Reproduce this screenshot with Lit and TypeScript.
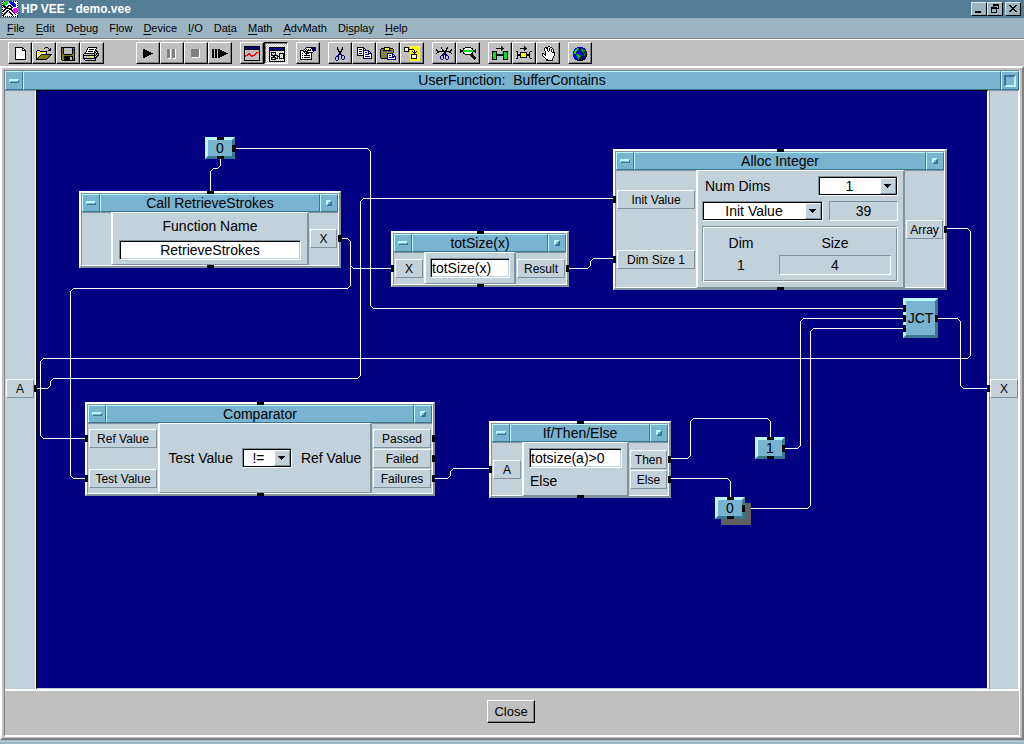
import { LitElement, html, svg, css } from "lit";
import { customElement, property } from "lit/decorators.js";

const PALETTE: Record<string, string> = {
  K: "#000000", W: "#ffffff", G: "#c0c0c0", S: "#808080", O: "#808000", Y: "#ffff00",
  B: "#000080", L: "#0000ff", R: "#ff0000", E: "#00e020", D: "#008000", C: "#008080", M: "#ff00ff",
};

/** Turns rows of palette letters into one path per colour. */
function bitmap(rows: string[], width: number, height: number, dx = 0, dy = 0) {
  const paths: Record<string, string> = {};
  rows.forEach((row, y) => {
    for (let x = 0; x < row.length; ) {
      let end = x + 1;
      while (row[end] === row[x]) end++;
      if (PALETTE[row[x]]) {
        paths[row[x]] = (paths[row[x]] ?? "") + `M${x + dx} ${y + dy}h${end - x}v1h${x - end}z`;
      }
      x = end;
    }
  });
  return html`<svg class="icon" width=${width} height=${height} viewBox="0 0 ${width} ${height}" shape-rendering="crispEdges" aria-hidden="true">
    ${Object.entries(paths).map(([k, d]) => svg`<path fill=${PALETTE[k]} d=${d}></path>`)}
  </svg>`;
}

interface Tool { name: string; rows: string[]; x: number; y: number; pressed?: boolean; disabled?: boolean }

const TOOLS: Tool[][] = [
  [
    { name: "New", x: 4, y: 2, rows: [
      "KKKKKKKK", "KWWWWWWKK", "KWWWWWWKWK", "KWWWWWWKKKK", "KWWWWWWWWWK", "KWWWWWWWWWK", "KWWWWWWWWWK",
      "KWWWWWWWWWK", "KWWWWWWWWWK", "KWWWWWWWWWK", "KWWWWWWWWWK", "KWWWWWWWWWK", "KKKKKKKKKKK"] },
    { name: "Open", x: 0, y: 2, rows: [
      "..........KKK...", ".........K...K.K", "..............KK", "..KKK........KKK", ".KYWYKKKKKKK....", ".KWYWYWYWYWK....",
      ".KYWYWYWYWYK....", ".KWYWYKKKKKKKKKKK", ".KYWYKOOOOOOOOOK.", ".KWYKOOOOOOOOOK..", ".KYKOOOOOOOOOK...", ".KKOOOOOOOOOK....", ".KKKKKKKKKKK....."] },
    { name: "Save", x: 2, y: 2, rows: [
      "KKKKKKKKKKKKKK", "KOKGGGGGGGGKGK", "KOKGGGGGGGGKKK", "KOKGGGGGGGGKOK", "KOKGGGGGGGGKOK", "KOKGGGGGGGGKOK", "KOKGGGGGGGGKOK",
      "KOOKKKKKKKKOOK", "KOOOOOOOOOOOOK", "KOOKKKKKKKKKOK", "KOOKKKKKKGGKOK", "KOOKKKKKKGGKOK", "KOOKKKKKKGGKOK", ".KKKKKKKKKKKKK"] },
    { name: "Print", x: 0, y: 2, rows: [
      ".....KKKKKKKKK..", "....KWWWWWWWWK..", "....KWKKKKKWK...", "...KWWWWWWWWKK..", "...KWKKKKKWKGKK.", "..KWWWWWWWWKKGK.",
      ".KKKKKKKKKKKGKKK", "KGGGGGGGGGGKGKGK", "KKKKKKKKKKKKKGKK", "KGGGGGGYYYGKGKK.", "KGGGGGGGGGGKKK..", "KKKKKKKKKKKKK...", ".KGGGGGGGGGGK...", "..KKKKKKKKKKK..."] },
  ],
  [
    { name: "Run", x: 4, y: 4, rows: ["KK", "KKKK", "KKKKKK", "KKKKKKKK", "KKKKKKKKKK", "KKKKKKKK", "KKKKKK", "KKKK", "KK"] },
    { name: "Pause", x: 4, y: 4, disabled: true, rows: [...Array(8).fill("SSSW.SSSW"), "SSSW.SSSW", ".WWW..WWW"] },
    { name: "Stop", x: 4, y: 4, disabled: true, rows: [...Array(8).fill("SSSSSSSSW"), ".WWWWWWWW"] },
    { name: "Step", x: 1, y: 4, rows: [
      "KK.KK.KK", "KK.KK.KKKK", "KK.KK.KKKKKK", "KK.KK.KKKKKKKK", "KK.KK.KKKKKKKKKK", "KK.KK.KKKKKKKK", "KK.KK.KKKKKK", "KK.KK.KKKK", "KK.KK.KK"] },
  ],
  [
    { name: "Panel view", x: 1, y: 1, rows: [
      "KKKKKKKKKKKKKKKK", "KLBBBBBBBBBBBBBK", "KBBBBBBBBBBBBBBK", "KKKKKKKKKKKKKKKK", "KGGGGGGGGGGGGGGK", "KGGGGGGGGGGGGGGK", "KGGGGGGGGGGGRRRK",
      "KGGGRRGGGGGRRGGK", "KGGRRRRGGGRRGGGK", "KRRRGGRRRRRGGGGK", "KRGGGGGRRGGGGGGK", "KGGGGGGGGGGGGGGK", "KGGGGGGGGGGGGGGK", "KGGGGGGGGGGGGGGK", "KKKKKKKKKKKKKKKK"] },
    { name: "Detail view", x: 2, y: 2, pressed: true, rows: [
      "KKKKKKKKKKKKKKKK", "KLBBBBBBBBBBBBBK", "KBBBBBBBBBBBBBBK", "KKKKKKKKKKKKKKKK", "K..............K", "K.KKKKK........K", "K.K...K...KKKKKK",
      "K.K...K...K...KK", "K.KKKKKKK.K...KK", "K...KK..KKK...KK", "K.KKKKK.K.K...KK", "K.K...KKK.KKKKKK", "K.KKKKK........K", "K..............K", "KKKKKKKKKKKKKKKK"] },
  ],
  [
    { name: "Properties", x: 1, y: 2, rows: [
      "......KKKKKKKBBB", ".....KWWWWWKKBBB", "....KWKWKWKWKBBB", "KKKKWKWKKKKWKKBB", "KWWKKKKKWWWWWK..", "KWWWKWKKKKKKK...", "KWKWWKKKKWWK....",
      "KWWWWWKWWWWK....", "KWKWKKKKKKWK....", "KWWWWWWWWWWK....", "KWKWKKKKKKWK....", "KWWWWWWWWWWK....", "KKKKKKKKKKKK...."] },
  ],
  [
    { name: "Cut", x: 4, y: 2, rows: [
      "..K....K", "..K....K", "..KK..KK", "...K..K.", "...KKKK.", "....KK..", "....KK..", "...BBBB.", "..BB..BBB", ".BBB..B..B", "B..B..B..B", "B..B..B..B", "B..B...BB.", ".BB......."] },
    { name: "Copy", x: 2, y: 2, rows: [
      "KKKKKKK", "KWWWWWKK", "KWKKKWKWK", "KWWWWWBBBBBB", "KWKKKWBWWWWBB", "KWWWWWBWBBWBWB", "KWKKKWBWWWWBBBB", "KWWWWWBWBBBBWWB", "KKKKKKBWWWWWWWB", "......BWBBBBBWB", "......BWWWWWWWB", "......BBBBBBBBB"] },
    { name: "Paste", x: 1, y: 2, rows: [
      "....KKKKKK", ".KKKKYYYYKKKK", "KOSOKYYYYKOSOK", "KSOKKKKKKKKOSK", "KOSOSOSOSOSOSK", "KSOSOSOSOSOSOK", "KOSOSOSBBBBBB.", "KSOSOSOBWWWWBB", "KOSOSOSBWBBWBWB", "KSOSOSOBWWWWBBBB", "KOSOSOSBWBBBBBWB", ".KKKKKKBWWWWWWWB", ".......BBBBBBBBB"] },
    { name: "Create UserObject", x: 1, y: 1, rows: [
      "......YYYYYYYYYY", "KKKKK.YYYYYYYYYY", "KWWWK.YYYYYYYYYY", "KWWWKKKKKKYYYYYY", "KWWWK.YYYYKYYYYY", "KKKKK.YYKYKYKYYY", "......YYYKKKYYYY", "......YYYYKYYYYY", "......YKKKKKKYYY", "......YKWWWWKYYY", "......YKWWWWKYYY", "......YKWWWWKYYY", "......YKKKKKKYYY", "......YYYYYYYYYY", "......YYYYYYYYYY"] },
  ],
  [
    { name: "Cut lines", x: 1, y: 2, rows: [
      ".....K.....K", ".....K....KK", "K.....K...K....K", "KK....KK.KK...KK", ".KKKKKKKKKKKKKK.", ".KK.....KK...KK.", "K......KKK.....K", "......BBKBB", ".....BBB.BBB", "....B..B.B..B", "....B..B.B..B", "....B..B.B..B", ".....BB...BB"] },
    { name: "Line probe", x: 1, y: 2, rows: [
      ".....KKKKKK", "...KKWWWWWWKK", "K..KWWWWWWWWK..K", "KKKEEEEEEEEEEKKK", "KKKEEEEEEEEEEKKK", "K..KWWWWWWWWK..K", "...KKWWWWWWKK", ".....KKKKKKKK", "..........KKKK", "...........KKKK", "............KKKK", ".............KKK", "..............K"] },
  ],
  [
    { name: "Step into", x: 1, y: 1, rows: [
      ".........K", ".........KK", "....KKKKKKKK", ".........KK", ".........K", "KKKKK......KKKKK", "KEEEK......KEEEK", "KEEEK......KEEEK", "KEEEKKKKKKKKEEEK", "KEEEKKKKKKKKEEEK", "KEEEK......KEEEK", "KEEEK......KEEEK", "KEEEK......KEEEK", "KKKKK......KKKKK"] },
    { name: "Step over", x: 1, y: 1, rows: [
      "........K", "........KK", "....KKKKKKK", "........KK", "........K", "KK............KK", ".K..KKKKKKK..K..", ".K..KYYYYYK..K..", ".KKKKYYYYYKKKK..", ".KKKKYYYYYKKKK..", ".K..KYYYYYK..K..", ".K..KKKKKKK..K..", "KK............KK"] },
    { name: "Breakpoint", x: 3, y: 1, rows: [
      "......KK", "...KKKWWKK", "..KWKKWKWWK", "..KWWKWKWKWK", "..KWWKWKWKWK", "...KWWKWWKWK", "...KWWWWWWKKK", "KK.KWWWWWWWWK", "KWKKWWWWWWWWK", "KWWKWWWWWWWWK", ".KWWWWWWWWWK", "..KWWWWWWWWK", "...KWWWWWWK.", "....KKWWWWK.", "....KKKKKKK"] },
  ],
  [
    { name: "Web", x: 2, y: 2, rows: [
      "....LLBBBL....", "..LLEDBBCBBL..", ".LDEEDBBDDDBB.", ".LEEDLLBDEDDB.", "LEEDLLLBBDDDKK", "LEELLLLLBDDBBK", "LDELCLLLLBBDBK", "LLLDDDCLLLBDDK", "BLLDEEDDLLBDBK", "BLLLDEEDBBBBKK", ".BLLDEDBBBBKK.", ".BBLLDDBBBKKK.", "..BBBDBBBKKK..", "....BBKKKK...."] },
  ],
];

const HP_LOGO = [
  "KWKEEEELLLWKWKWK", "WEEEEEWLLLLLWWWW", "KEEEEEWWLLLLLWWK", "WEEEEWWWWLLLLLWW", "KKKWWWKKKWLLLLWK", "WKKKWKKWKKWLLLWW", "KWKKKKWWWKKWWWWK",
  "WWWKKKKKKKWWMMMW", "KWKKWWWKKKWMMMMM", "WKKWWKKWWKKMMMMM", "KKWWKKWKWWKMMMMK", "WWWKKWWKKWWKMMMW", "KWKKWWWWKKWWKWWK", "WKKWWWWWWKKWWKWW", "KKWWWWWWWWKWWWWK", "WKWKWKWKWKWKWKWK",
];

const MENUS: [string, string, string][] = [
  ["", "F", "ile"], ["", "E", "dit"], ["De", "b", "ug"], ["F", "l", "ow"], ["", "D", "evice"], ["", "I", "/O"],
  ["Da", "t", "a"], ["", "M", "ath"], ["", "A", "dvMath"], ["Di", "s", "play"], ["", "H", "elp"],
];

type Point = [number, number];

/** Diagram coordinates of the workspace's top left corner. */
const ORIGIN = { x: 37, y: 91 };

const WIRES: Point[][] = [
  [[235, 148], [370, 148], [370, 308], [903, 308]],
  [[220, 158], [220, 168], [210, 168], [210, 191]],
  [[341, 238], [350, 238], [350, 268], [391, 268]],
  [[341, 238], [350, 238], [350, 288], [70, 288], [70, 478], [86, 478]],
  [[568, 268], [590, 268], [590, 258], [613, 258]],
  [[36, 388], [50, 388], [50, 378], [360, 378], [360, 198], [613, 198]],
  [[946, 228], [970, 228], [970, 358], [40, 358], [40, 438], [86, 438]],
  [[937, 318], [960, 318], [960, 388], [990, 388]],
  [[434, 478], [450, 478], [450, 468], [490, 468]],
  [[670, 458], [690, 458], [690, 418], [770, 418], [770, 438]],
  [[670, 478], [730, 478], [730, 498]],
  [[784, 448], [800, 448], [800, 318], [904, 318]],
  [[744, 508], [810, 508], [810, 328], [904, 328]],
];

/** Orthogonal route with its corners cut off. */
function route(points: Point[]): string {
  const cut = 3;
  const toward = (a: Point, b: Point): Point => [a[0] + Math.sign(b[0] - a[0]) * cut, a[1] + Math.sign(b[1] - a[1]) * cut];
  const out: Point[] = [points[0]];
  for (let i = 1; i < points.length - 1; i++) out.push(toward(points[i], points[i - 1]), toward(points[i], points[i + 1]));
  out.push(points[points.length - 1]);
  return out.map(([x, y]) => `${x - ORIGIN.x + 0.5},${y - ORIGIN.y + 0.5}`).join(" ");
}

const place = (x: number, y: number, w: number, h: number) =>
  `left:${x - ORIGIN.x}px;top:${y - ORIGIN.y}px;width:${w}px;height:${h}px`;

const sharedStyles = css`
  .port {
    position: relative;
    box-sizing: border-box;
    height: 19px;
    border: 1px solid;
    border-color: #fff #80929c #80929c #fff;
    font-size: 12px;
    line-height: 18px;
    text-align: center;
    white-space: nowrap;
  }
  .port::after {
    content: "";
    position: absolute;
    top: 5px;
    width: 3px;
    height: 7px;
    background: #000;
  }
  .in::after { left: -5px; }
  .out::after { right: -5px; }
  .bar {
    box-sizing: border-box;
    width: 10px;
    height: 4px;
    border: 1px solid;
    border-color: #b8f8ff #387890 #387890 #b8f8ff;
    border-top-width: 2px;
  }
`;

@customElement("vee-node")
export class VeeNode extends LitElement {
  @property() heading = "";
  @property({ attribute: false }) inputs: string[] = [];
  @property({ attribute: false }) outputs: string[] = [];
  @property({ type: Number }) inwidth = 30;
  @property({ type: Number }) outwidth = 30;
  @property({ type: Number }) ingap = 1;

  static styles = [sharedStyles, css`
    :host {
      position: absolute;
      box-sizing: border-box;
      display: flex;
      border: 2px solid;
      border-color: #fff #80929c #80929c #fff;
      background: #c3d2da;
      font-size: 14px;
    }
    :host::before, :host::after {
      content: "";
      position: absolute;
      left: calc(50% - 3px);
      width: 7px;
      height: 3px;
      background: #000;
    }
    :host::before { top: -2px; }
    :host::after { bottom: -2px; }
    .frame {
      flex: 1;
      display: flex;
      flex-direction: column;
      border: 1px solid;
      border-color: #80929c #fff #fff #80929c;
    }
    .title { display: flex; height: 18px; background: #78b4d0; }
    h2 { flex: 1; margin: 0; font-size: 14px; font-weight: normal; line-height: 17px; text-align: center; white-space: nowrap; }
    h2, button {
      box-sizing: border-box;
      border: 1px solid;
      border-color: #b8f8ff #387890 #387890 #b8f8ff;
    }
    button { width: 18px; padding: 0; display: grid; place-items: center; background: #78b4d0; }
    .box { width: 6px; height: 6px; box-sizing: border-box; border: 2px solid; border-color: #b8f8ff #387890 #387890 #b8f8ff; }
    .body { flex: 1; display: flex; }
    .column { flex: none; box-sizing: border-box; padding: 0 1px 1px; display: flex; flex-direction: column; justify-content: center; border-top: 1px solid #80929c; }
    .center { flex: 1; min-width: 0; box-sizing: border-box; border: 1px solid; border-width: 1px 2px; border-color: #fff #80929c #80929c #fff; display: flex; flex-direction: column; }
  `];

  render() {
    return html`<div class="frame">
      <div class="title">
        <button aria-label="Object menu"><span class="bar"></span></button>
        <h2>${this.heading}</h2>
        <button aria-label="Minimize"><span class="box"></span></button>
      </div>
      <div class="body">
        <div class="column" style="width:${this.inwidth}px;gap:${this.ingap}px">
          ${this.inputs.map((p) => html`<div class="port in">${p}</div>`)}
        </div>
        <div class="center"><slot></slot></div>
        <div class="column" style="width:${this.outwidth}px;gap:1px">
          ${this.outputs.map((p) => html`<div class="port out">${p}</div>`)}
        </div>
      </div>
    </div>`;
  }
}

@customElement("app-root")
export class AppRoot extends LitElement {
  static styles = [sharedStyles, css`
    :host {
      display: flex;
      flex-direction: column;
      min-height: 100vh;
      background: #9cb5c3;
      color: #000;
      font-family: "Liberation Sans", Arial, sans-serif;
      font-size: 14px;
      overflow: hidden;
    }
    button, input, select { font-family: inherit; color: inherit; margin: 0; border-radius: 0; }
    svg { display: block; }
    .titlebar { display: flex; align-items: center; gap: 3px; height: 18px; padding: 0 3px 0 2px; background: #557d96; color: #fff; }
    .titlebar h1 { flex: 1; margin: 0; font-size: 12px; line-height: 18px; }
    .winbuttons { display: flex; }
    .winbuttons button { width: 16px; height: 14px; padding: 0; display: grid; place-items: center; background: #9cb5c3; border: 1px solid; border-color: #dce8f0 #000 #000 #dce8f0; }
    .winbuttons button:last-child { margin-left: 2px; }
    .menubar { display: flex; gap: 11px; height: 20px; padding: 0 7px; background: #9cb5c3; border-bottom: 1px solid #808080; }
    .menubar button { padding: 0; border: 0; background: none; font-size: 11px; line-height: 20px; }
    .menubar u { text-underline-offset: 2px; }
    .toolbar { display: flex; gap: 8px; padding: 2px 8px; background: #c0c0c0; border-top: 1px solid #fff; }
    .toolbar .group { display: flex; }
    .toolbar .group:first-child { margin-right: 24px; }
    .tool { box-sizing: border-box; width: 24px; height: 22px; padding: 1px 2px; background: #c0c0c0; border: 1px solid; border-color: #fff #000 #000 #fff; box-shadow: inset -1px -1px #808080; }
    .tool.pressed { border-color: #000 #fff #fff #000; box-shadow: inset 1px 1px #808080; background: #c0c0c0 repeating-conic-gradient(#fff 0 25%, #c0c0c0 0 50%) 0 0 / 2px 2px; }
    .window {
      flex: 1;
      display: flex;
      flex-direction: column;
      margin-bottom: 4px;
      border: 2px solid;
      border-color: #fff #808080 #808080 #fff;
      background: #c0c0c0;
      padding: 2px 2px 1px 2px;
      box-shadow: 0 1px #9cb5c3, 0 2px #c3d2da;
    }
    .inner { flex: 1; display: flex; flex-direction: column; border: 1px solid; border-color: #808080 #fff #fff #808080; border-bottom-width: 2px; }
    .caption { display: flex; height: 19px; background: #78b4d0; }
    .caption h2 { flex: 1; margin: 0; font-size: 14px; font-weight: normal; line-height: 17px; text-align: center; }
    .caption h2, .caption button { box-sizing: border-box; border: 1px solid; border-color: #b8f8ff #387890 #387890 #b8f8ff; }
    .caption button { width: 18px; padding: 0; display: grid; place-items: center; background: #78b4d0; }
    .sunken { width: 12px; height: 12px; box-sizing: border-box; border: 2px solid; border-color: #387890 #b8f8ff #b8f8ff #387890; }
    .stage { flex: 1; display: flex; background: #c3d2da; }
    .rail { box-sizing: border-box; width: 31px; padding: 0 1px 4px; display: flex; flex-direction: column; justify-content: center; border-top: 1px solid #80929c; border-right: 1px solid #fff; }
    .rail.right { width: 30px; padding: 0 0 4px; border-left: 1px solid #80929c; }
    .rail .port { z-index: 1; }
    .rail .in::after { left: -4px; }
    .rail .out::after { right: -4px; }
    .canvas { position: relative; flex: 1; min-height: 560px; overflow: hidden; background: #000080; border: 1px solid; border-color: #000 #c3d2da #c3d2da #000; border-right: 2px solid #fff; }
    .canvas > svg { width: 100%; height: 100%; }
    .wires polyline { fill: none; stroke: #fff; stroke-width: 1; }
    .footer { display: flex; justify-content: center; padding: 9px 2px 12px 0; border-top: 2px solid #fff; background: #c0c0c0; }
    .footer button { width: 48px; height: 23px; padding: 0; background: #c0c0c0; border: 1px solid; border-color: #fff #000 #000 #fff; box-shadow: inset -1px -1px #808080; font-size: 13px; line-height: 21px; }
    .chip { position: absolute; box-sizing: border-box; display: grid; place-items: center; border: 3px solid; border-color: #b8f8ff #387890 #387890 #b8f8ff; background: #78b4d0; line-height: 16px; }
    .chip.lifted { box-shadow: 6px 6px #606060; }
    .pin { position: absolute; background: #000; }
    .pin.top, .pin.bottom { left: calc(50% - 3px); width: 7px; height: 3px; }
    .pin.top { top: -3px; }
    .pin.bottom { bottom: -3px; }
    .pin.right, .pin.left { width: 3px; height: 7px; top: calc(50% - 3px); }
    .pin.right { right: -3px; }
    .pin.left { left: -3px; }
    .pin.first { top: 4px; }
    .pin.third { top: 24px; }

    input { box-sizing: border-box; width: 100%; min-width: 0; height: 20px; padding: 0; font-size: 14px; background: #fff; border: 1px solid; border-color: #80929c #fff #fff #80929c; box-shadow: inset 1px 1px #000, inset -1px -1px #c3d2da; outline: none; }
    input.text { padding-left: 1px; }
    input.mid { text-align: center; }
    .readout { box-sizing: border-box; height: 20px; border: 1px solid; border-color: #80929c #fff #fff #80929c; line-height: 18px; text-align: center; }
    .select { display: grid; align-items: center; }
    .select select { grid-area: 1 / 1; box-sizing: border-box; width: 100%; height: 20px; padding: 0 17px 0 0; appearance: none; font-size: 14px; text-align: center; text-align-last: center; background: #fff; border: 1px solid; border-color: #80929c #fff #fff #80929c; box-shadow: inset 1px 1px #000, inset -1px -1px #000; outline: none; }
    .select .arrow { grid-area: 1 / 1; justify-self: end; box-sizing: border-box; width: 16px; height: 16px; margin-right: 2px; display: grid; place-items: center; background: #c3d2da; border: 1px solid; border-color: #fff #80929c #80929c #fff; pointer-events: none; }
    .call, .tot, .branch { display: flex; flex-direction: column; }
    .call { padding: 4px 6px; gap: 5px; }
    .call label { text-align: center; line-height: 18px; }
    .tot { padding: 5px 4px; }
    .branch { padding: 5px; gap: 4px; }
    .branch span { padding-left: 1px; line-height: 18px; }
    .compare { flex: 1; display: flex; align-items: center; justify-content: center; gap: 9px; white-space: nowrap; }
    .compare .select { width: 50px; }
    .alloc { flex: 1; display: flex; flex-direction: column; gap: 5px; padding: 5px 5px 5px 4px; }
    .alloc .row { display: flex; gap: 6px; }
    .alloc .row label { flex: 1; padding-left: 3px; line-height: 20px; }
    .alloc .row .select { width: 80px; }
    .alloc .row .wide { width: auto; flex: 1; }
    .alloc .row .readout { width: 69px; }
    .dims { box-sizing: border-box; height: 56px; display: grid; grid-template-columns: 76px 112px; row-gap: 2px; align-content: center; text-align: center; line-height: 20px; border: 1px solid; border-color: #80929c #fff #fff #80929c; box-shadow: inset 1px 1px #fff, inset -1px -1px #80929c; }
  `];

  private select(id: string, label: string, value: string, cls = "") {
    return html`<div class="select ${cls}">
      <select id=${id} aria-label=${label}><option>${value}</option></select>
      <span class="arrow"><svg width="8" height="4" viewBox="0 0 8 4" shape-rendering="crispEdges"><path d="M0 0h7v1h-1v1h-1v1h-1v1h-1v-1h-1v-1h-1v-1h-1z"></path></svg></span>
    </div>`;
  }

  private chip(text: string, x: number, y: number, lifted = false) {
    return html`<div class="chip ${lifted ? "lifted" : ""}" style=${place(x, y, 30, 22)}>${text}
      <i class="pin top"></i><i class="pin bottom"></i><i class="pin right"></i></div>`;
  }

  render() {
    return html`
      <header class="titlebar">
        ${bitmap(HP_LOGO, 16, 16)}
        <h1>HP VEE - demo.vee</h1>
        <div class="winbuttons">
          <button aria-label="Minimize">${bitmap(["KKKKKK", "KKKKKK"], 12, 10, 2, 7)}</button>
          <button aria-label="Restore">${bitmap(["..KKKKKK", "..KKKKKK", "..K....K", "KKKKKK.K", "KKKKKKKK", "K....K", "K....K", "K....K", "KKKKKK"], 12, 10, 2, 0)}</button>
          <button aria-label="Close">${bitmap(["KK....KK", ".KK..KK.", "..KKKK..", "...KK...", "..KKKK..", ".KK..KK.", "KK....KK"], 12, 10, 2, 1)}</button>
        </div>
      </header>
      <nav class="menubar">
        ${MENUS.map(([a, k, b]) => html`<button>${a}<u>${k}</u>${b}</button>`)}
      </nav>
      <div class="toolbar" role="toolbar">
        ${TOOLS.map((g) => html`<div class="group">${g.map((t) => html`<button class="tool ${t.pressed ? "pressed" : ""}" aria-label=${t.name} ?disabled=${t.disabled}>${bitmap(t.rows, 18, 17, t.x, t.y)}</button>`)}</div>`)}
      </div>
      <main class="window">
        <div class="inner">
          <div class="caption">
            <button aria-label="Window menu"><span class="bar"></span></button>
            <h2>UserFunction:&nbsp; BufferContains</h2>
            <button aria-label="Maximize"><span class="sunken"></span></button>
          </div>
          <div class="stage">
            <div class="rail left"><div class="port out">A</div></div>
            <div class="canvas">
              <svg class="wires" shape-rendering="crispEdges" aria-hidden="true">
                ${WIRES.map((w) => svg`<polyline points=${route(w)}></polyline>`)}
              </svg>
              ${this.chip("0", 205, 137)}
              <vee-node heading="Call RetrieveStrokes" .outputs=${["X"]} inwidth="29" outwidth="29" style=${place(79, 191, 262, 77)}>
                <div class="call">
                  <label for="fn">Function Name</label>
                  <input id="fn" class="mid" .value=${"RetrieveStrokes"}>
                </div>
              </vee-node>
              <vee-node heading="totSize(x)" .inputs=${["X"]} .outputs=${["Result"]} inwidth="30" outwidth="50" style=${place(391, 231, 178, 56)}>
                <div class="tot"><input class="text" aria-label="Formula" .value=${"totSize(x)"}></div>
              </vee-node>
              <vee-node heading="Alloc Integer" .inputs=${["Init Value", "Dim Size 1"]} .outputs=${["Array"]} inwidth="80" outwidth="39" ingap="41" style=${place(613, 149, 334, 141)}>
                <div class="alloc">
                  <div class="row"><label for="dims">Num Dims</label>${this.select("dims", "Num Dims", "1")}</div>
                  <div class="row">${this.select("init", "Initialisation", "Init Value", "wide")}<div class="readout">39</div></div>
                  <div class="dims">
                    <span>Dim</span><span>Size</span>
                    <span>1</span><div class="readout">4</div>
                  </div>
                </div>
              </vee-node>
              <div class="chip" style=${place(903, 298, 35, 40)}>JCT
                <i class="pin left first"></i><i class="pin left"></i><i class="pin left third"></i><i class="pin right"></i>
              </div>
              <vee-node heading="Comparator" .inputs=${["Ref Value", "Test Value"]} .outputs=${["Passed", "Failed", "Failures"]} inwidth="70" outwidth="60" ingap="21" style=${place(85, 402, 350, 94)}>
                <div class="compare"><span>Test Value</span>${this.select("cmp", "Comparison", "!=")}<span>Ref Value</span></div>
              </vee-node>
              <vee-node heading="If/Then/Else" .inputs=${["A"]} .outputs=${["Then", "Else"]} inwidth="30" outwidth="39" style=${place(489, 421, 182, 77)}>
                <div class="branch"><input class="text" aria-label="If condition" .value=${"totsize(a)>0"}><span>Else</span></div>
              </vee-node>
              ${this.chip("1", 755, 437)}
              ${this.chip("0", 715, 497, true)}
            </div>
            <div class="rail right"><div class="port in">X</div></div>
          </div>
          <footer class="footer"><button>Close</button></footer>
        </div>
      </main>
    `;
  }
}
